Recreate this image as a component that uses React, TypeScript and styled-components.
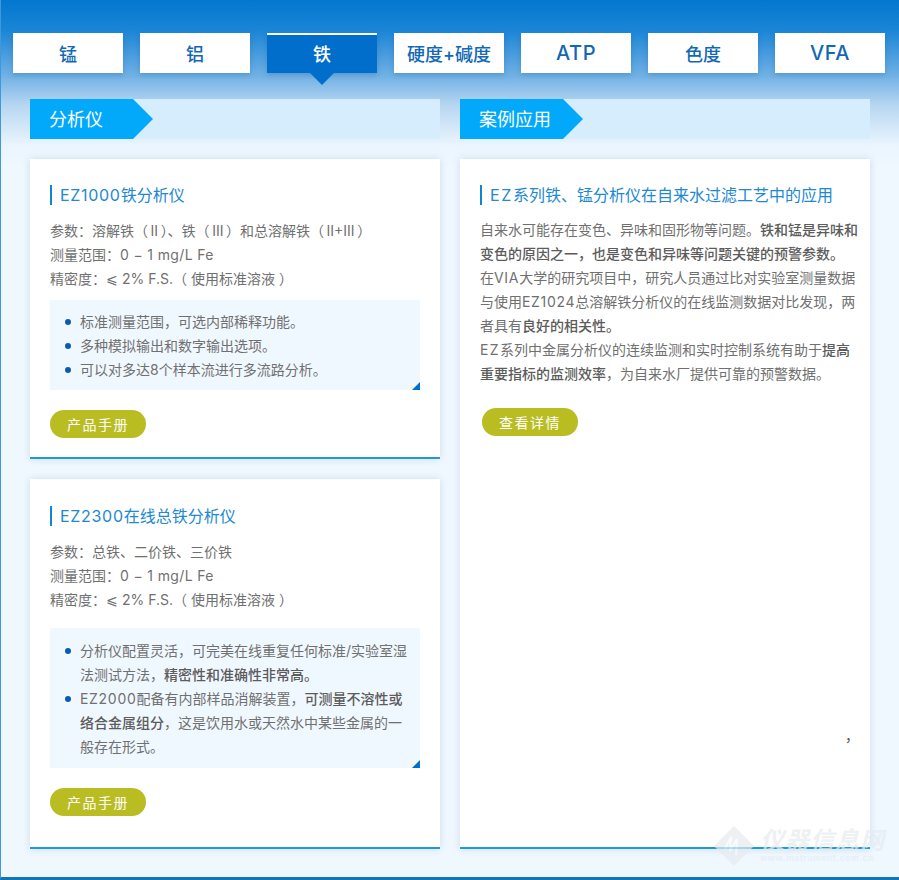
import React from "react";
import styled, { createGlobalStyle } from "styled-components";

const Global = createGlobalStyle`
  html, body { margin: 0; padding: 0; }
  body { font-family: "Inter", "Noto Sans CJK SC", sans-serif; }
  * { box-sizing: border-box; }
`;

const Page = styled.div`
  position: relative;
  width: 899px;
  height: 880px;
  overflow: hidden;
  background: linear-gradient(180deg, #0377cf 0, #1a85d6 30px, #6fb0e4 75px, #b6d6f1 105px, #eaf5fe 145px, #f0f8ff 170px);
  border-bottom: 3px solid #0f76b8;
  border-left: 1px solid #3f97dc;
  padding-top: 33px;
`;

const Tabs = styled.nav`
  display: flex;
  gap: 17px;
  margin-left: 12px;
`;

const Tab = styled.div<{ $active?: boolean; $latin?: boolean }>`
  position: relative;
  width: 110px;
  height: 40px;
  padding-bottom: ${(p) => (p.$active ? "3px" : "1px")};
  display: flex;
  align-items: center;
  justify-content: center;
  font-size: ${(p) => (p.$latin ? "20px" : "18px")};
  letter-spacing: ${(p) => (p.$latin ? "0.6px" : "0")};
  font-weight: 500;
  color: ${(p) => (p.$active ? "#fff" : "#1168b5")};
  background: ${(p) => (p.$active ? "#026ecb" : "#fff")};
  border-top: ${(p) => (p.$active ? "2px solid #fff" : "none")};
  box-shadow: 0 2px 5px rgba(20, 80, 140, 0.25);
  ${(p) =>
    p.$active &&
    `&::after {
      content: "";
      position: absolute;
      left: 43px;
      top: 38px;
      border-left: 12px solid transparent;
      border-right: 12px solid transparent;
      border-top: 12px solid #026ecb;
    }`}
`;

const Columns = styled.div`
  display: grid;
  grid-template-columns: 410px 410px;
  gap: 20px;
  margin: 26px 0 0 29px;
`;

const Column = styled.section`
  display: flex;
  flex-direction: column;
  gap: 20px;
`;

const SectionBar = styled.div`
  height: 40px;
  background: #d6edfe;
`;

const SectionLabel = styled.div`
  width: 123px;
  height: 40px;
  padding: 0 0 2px 19px;
  display: flex;
  align-items: center;
  color: #fff;
  font-size: 18px;
  background: #02a9fb;
  clip-path: polygon(0 0, 103px 0, 123px 20px, 103px 40px, 0 40px);
`;

const Card = styled.article<{ $top?: number; $h: number }>`
  position: relative;
  height: ${(p) => p.$h}px;
  padding: ${(p) => p.$top ?? 26}px 20px 0;
  background: #fff;
  border-bottom: 2px solid #1f9ad6;
  box-shadow: 0 0 8px rgba(60, 110, 160, 0.2);
`;

const Title = styled.h3`
  margin: 0;
  height: 20px;
  padding-left: 8px;
  border-left: 2px solid #0f86cf;
  color: #2189d1;
  font-size: 16px;
  font-weight: 400;
  line-height: 20px;
  white-space: nowrap;
`;

const Latin = styled.span<{ $ls?: number }>`
  letter-spacing: ${(p) => p.$ls ?? 0.7}px;
`;

const Lines = styled.div`
  margin-top: 14px;
  color: #707070;
  font-size: 14px;
  line-height: 24px;
`;

const Line = styled.div`
  white-space: nowrap;
`;

const Info = styled.ul<{ $top: number; $pad: string }>`
  position: relative;
  margin: ${(p) => p.$top}px 0 0;
  padding: ${(p) => p.$pad};
  list-style: none;
  background: #f0f8ff;
  color: #707070;
  font-size: 14px;
  line-height: 24px;
  &::after {
    content: "";
    position: absolute;
    right: 0;
    bottom: 0;
    border-left: 8px solid transparent;
    border-bottom: 8px solid #026ecb;
  }
`;

const Item = styled.li`
  position: relative;
  &::before {
    content: "";
    position: absolute;
    left: -15px;
    top: 9px;
    width: 6px;
    height: 6px;
    border-radius: 50%;
    background: #0a5cb0;
  }
`;

const Strong = styled.b`
  font-weight: 500;
  color: #5c5c5c;
`;

const Pill = styled.div<{ $top: number; $left?: number }>`
  width: 96px;
  height: 28px;
  padding-bottom: 1px;
  margin: ${(p) => p.$top}px 0 0 ${(p) => p.$left ?? 0}px;
  border-radius: 14px;
  background: #b9bd22;
  color: #fff;
  font-size: 14px;
  display: flex;
  align-items: center;
  justify-content: center;
  letter-spacing: 1.5px;
`;

const Body = styled.div`
  margin-top: 13px;
  margin-right: -10px;
  color: #707070;
  font-size: 14px;
  line-height: 24px;
`;

const Stray = styled.span`
  position: absolute;
  right: 11px;
  top: 566px;
  color: #555;
  font-size: 14px;
`;

const Mark = styled.div`
  position: absolute;
  right: 14px;
  bottom: 10px;
  display: flex;
  align-items: center;
  gap: 5px;
  opacity: 0.7;
  pointer-events: none;
`;

const MarkText = styled.div`
  display: flex;
  flex-direction: column;
  color: #e6ecf0;
  font-weight: 700;
`;

const MarkName = styled.span`
  font-size: 24px;
  line-height: 25px;
  letter-spacing: 1px;
  font-style: italic;
`;

const MarkUrl = styled.span`
  font-size: 8.5px;
  line-height: 11px;
  letter-spacing: 0.5px;
`;

const tabs = ["锰", "铝", "铁", "硬度+碱度", "ATP", "色度", "VFA"];

export default function App() {
  return (
    <Page>
      <Global />
      <Tabs>
        {tabs.map((t) => (
          <Tab key={t} $active={t === "铁"} $latin={/^[A-Z]+$/.test(t)}>{t}</Tab>
        ))}
      </Tabs>
      <Columns>
        <Column>
          <SectionBar><SectionLabel>分析仪</SectionLabel></SectionBar>
          <Card $h={300}>
            <Title><Latin>EZ1000</Latin>铁分析仪</Title>
            <Lines>
              <Line>参数：溶解铁（{"\u2009"}II{"\u2009"}）、铁（{"\u2009"}III{"\u2009"}）和总溶解铁（{"\u2009"}II+III{"\u2009"}）</Line>
              <Line>测量范围：<Latin $ls={0.35}>0 − 1 mg/L Fe</Latin></Line>
              <Line>精密度：⩽ 2% F.S.（ 使用标准溶液 ）</Line>
            </Lines>
            <Info $top={9} $pad="10px 10px 8px 30px">
              <Item>标准测量范围，可选内部稀释功能。</Item>
              <Item>多种模拟输出和数字输出选项。</Item>
              <Item>可以对多达8个样本流进行多流路分析。</Item>
            </Info>
            <Pill $top={20}>产品手册</Pill>
          </Card>
          <Card $h={370} $top={27}>
            <Title><Latin>EZ2300</Latin>在线总铁分析仪</Title>
            <Lines>
              <Line>参数：总铁、二价铁、三价铁</Line>
              <Line>测量范围：<Latin $ls={0.35}>0 − 1 mg/L Fe</Latin></Line>
              <Line>精密度：⩽ 2% F.S.（ 使用标准溶液 ）</Line>
            </Lines>
            <Info $top={16} $pad="11px 10px 9px 30px">
              <Item>分析仪配置灵活，可完美在线重复任何标准/实验室湿法测试方法，<Strong>精密性和准确性非常高。</Strong></Item>
              <Item><Latin>EZ2000</Latin>配备有内部样品消解装置，<Strong>可测量不溶性或络合金属组分</Strong>，这是饮用水或天然水中某些金属的一般存在形式。</Item>
            </Info>
            <Pill $top={20}>产品手册</Pill>
          </Card>
        </Column>
        <Column>
          <SectionBar><SectionLabel>案例应用</SectionLabel></SectionBar>
          <Card $h={690}>
            <Title><Latin $ls={1.6}>EZ</Latin>系列铁、锰分析仪在自来水过滤工艺中的应用</Title>
            <Body>
              自来水可能存在变色、异味和固形物等问题。<Strong>铁和锰是异味和变色的原因之一，也是变色和异味等问题关键的预警参数。</Strong><br />
              在<Latin>VIA</Latin>大学的研究项目中，研究人员通过比对实验室测量数据与使用<Latin>EZ1024</Latin>总溶解铁分析仪的在线监测数据对比发现，两者具有<Strong>良好的相关性。</Strong><br />
              <Latin $ls={1.4}>EZ</Latin>系列中金属分析仪的连续监测和实时控制系统有助于<Strong>提高重要指标的监测效率</Strong>，为自来水厂提供可靠的预警数据。
            </Body>
            <Pill $top={22} $left={2}>查看详情</Pill>
            <Stray>，</Stray>
          </Card>
        </Column>
      </Columns>
      <Mark>
        <svg width="42" height="42" viewBox="0 0 42 42" fill="none">
          <path d="M21 1 41 21 21 41 1 21Z" fill="#e6ecf0" />
          <path d="M12 24 18 12 17 26 24 14 23 30" stroke="#f7fbff" strokeWidth="2" />
        </svg>
        <MarkText>
          <MarkName>仪器信息网</MarkName>
          <MarkUrl>www.instrument.com.cn</MarkUrl>
        </MarkText>
      </Mark>
    </Page>
  );
}
